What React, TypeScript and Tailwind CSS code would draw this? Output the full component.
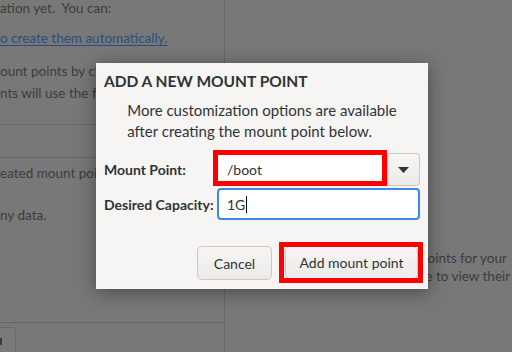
const sans = "font-['Lato','Noto_Sans',sans-serif]"

function Backdrop() {
  return (
    <div className={`flex h-full w-full text-[13.5px] text-[#3c3c3c] ${sans}`}>
      <div className="flex h-full w-[225px] shrink-0 flex-col border-r border-[#676767]">
        <div className="-mt-[2px] h-[20px] whitespace-pre leading-[20px]">ation yet.  You can:</div>
        <div className="mt-[10px] h-[20px] whitespace-nowrap leading-[20px] text-[#2b4c7e] underline underline-offset-2">
          o create them automatically.
        </div>
        <div className="mt-[13px] h-[20px] whitespace-nowrap leading-[20px]">ount points by clicking the '+' button.</div>
        <div className="mt-[2px] h-[20px] whitespace-nowrap leading-[20px]">nts will use the following partitioning</div>
        <div className="mt-[21px] h-px bg-[#676767]" />
        <div className="mt-[32px] h-px bg-[#676767]" />
        <div className="mt-[5px] h-[20px] whitespace-nowrap leading-[20px]">eated mount points will be deleted.</div>
        <div className="mt-[22px] h-[20px] whitespace-nowrap leading-[20px]">ny data.</div>
        <div className="mt-auto h-[30px]">
          <div className="h-px bg-[#676767]" />
          <div className="mt-[4px] h-[26px] w-[16px] rounded-tr-[5px] border-r border-t border-[#6a6a6a] bg-[#7a7a7a]">
            <div className="mt-[10px] h-[7px] w-[2px] bg-[#3a3a3a]" />
          </div>
        </div>
      </div>
      <div className="min-w-0 flex-1 overflow-hidden pt-[249px] leading-[18px] whitespace-nowrap">
        <div className="pl-[195px]">points for your</div>
        <div className="pl-[181px]">here to view their d</div>
      </div>
    </div>
  )
}

function Annotation({ className }: { className: string }) {
  return <div className={`pointer-events-none absolute border-[5px] border-[#ff0000] ${className}`} />
}

export default function App() {
  return (
    <div className="relative h-[352px] w-[512px] overflow-hidden bg-[#787878]">
      <Backdrop />

      <div
        className={`absolute left-[96px] top-[63px] flex h-[226px] w-[332px] flex-col bg-[#f6f5f4] px-2 text-[#2e3436] shadow-[0_3px_18px_rgba(0,0,0,0.4)] ${sans}`}
      >
        <h2 className="mt-[8px] h-[20px] text-[15.5px] font-bold leading-[20px]">ADD A NEW MOUNT POINT</h2>

        <div className="mt-[9px] flex justify-center">
          <p className="text-[15px] leading-[21px]">
            More customization options are available
            <br />
            after creating the mount point below.
          </p>
        </div>

        <div className="mt-[11px] grid grid-cols-[113px_1fr] items-center gap-y-[2px] text-[14px]">
          <label className="font-bold">Mount Point:</label>
          <div className="flex h-[33px]">
            <div className="relative flex flex-1 items-center rounded-l-[4px] border border-r-0 border-[#cdc7c2] bg-white pl-[9px]">
              /boot
              <Annotation className="-left-[5px] -top-[4px] -bottom-[1px] right-0" />
            </div>
            <button className="flex w-[33px] items-center justify-center rounded-r-[4px] border border-[#cdc7c2] bg-gradient-to-b from-[#f6f5f4] to-[#edebe9]">
              <svg width="11" height="6" viewBox="0 0 11 6">
                <path d="M0 0 H11 L5.5 6 Z" fill="#2e3436" />
              </svg>
            </button>
          </div>

          <label className="font-bold">Desired Capacity:</label>
          <div className="flex h-[32px] items-center rounded-[4px] border-2 border-[#3d8ae5] bg-white pl-[8px]">
            1G
            <span className="ml-px h-[17px] w-px bg-black" />
          </div>
        </div>

        <div className="mt-auto flex justify-end gap-[13px] pb-[9px] pr-[2px] text-[14px]">
          <button className="h-[34px] w-[75px] rounded-[5px] border border-[#cdc7c2] bg-gradient-to-b from-[#f6f5f4] to-[#edebe9]">
            Cancel
          </button>
          <div className="relative">
            <button className="h-[33px] w-[133px] rounded-[5px] border border-[#cdc7c2] bg-gradient-to-b from-[#f6f5f4] to-[#edebe9]">
              Add mount point
            </button>
            <Annotation className="-left-[6px] -right-[5px] -top-[4px] -bottom-[3px]" />
          </div>
        </div>
      </div>
    </div>
  )
}
